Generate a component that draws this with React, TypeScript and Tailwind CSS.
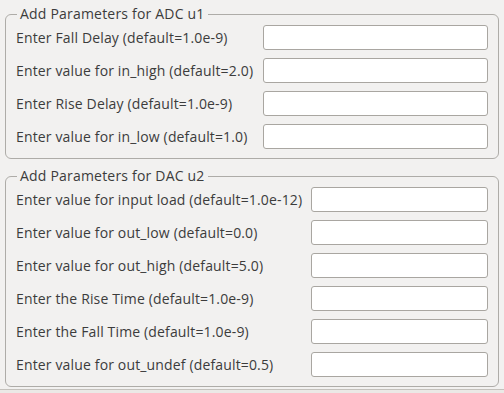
const ADC_FIELDS = [
  "Enter Fall Delay (default=1.0e-9)",
  "Enter value for in_high (default=2.0)",
  "Enter Rise Delay (default=1.0e-9)",
  "Enter value for in_low (default=1.0)",
];

const DAC_FIELDS = [
  "Enter value for input load (default=1.0e-12)",
  "Enter value for out_low (default=0.0)",
  "Enter value for out_high (default=5.0)",
  "Enter the Rise Time (default=1.0e-9)",
  "Enter the Fall Time (default=1.0e-9)",
  "Enter value for out_undef (default=0.5)",
];

function Group({
  title,
  fields,
  labelCol,
  className = "",
}: {
  title: string;
  fields: string[];
  labelCol: string;
  className?: string;
}) {
  return (
    <fieldset
      className={`mx-[5px] rounded-[6px] border border-[#aeaca8] pl-[10px] pr-[10px] pt-[2px] pb-[9px] ${className}`}
    >
      <legend className="ml-[1px] px-[3px] text-[14px] leading-[18px] tracking-[0.2px] text-[#3c3c3c]">{title}</legend>
      <div className={`grid ${labelCol} gap-y-[8px]`}>
        {fields.map((f) => (
          <div key={f} className="contents">
            <label className="flex h-[25px] items-center whitespace-nowrap text-[14px] tracking-[0.15px] text-[#3c3c3c]">{f}</label>
            <input
              type="text"
              className="h-[25px] w-full rounded-[3px] border border-[#a9a6a1] bg-white px-1 text-[14px] outline-none"
            />
          </div>
        ))}
      </div>
    </fieldset>
  );
}

export default function App() {
  return (
    <div className="flex h-[393px] w-[504px] flex-col overflow-hidden bg-[#f2f1f0] font-['Open_Sans',sans-serif]">
      <Group title="Add Parameters for ADC u1" fields={ADC_FIELDS} labelCol="grid-cols-[247px_1fr]" className="mt-[5px]" />
      <Group title="Add Parameters for DAC u2" fields={DAC_FIELDS} labelCol="grid-cols-[295px_1fr]" className="mt-[8px]" />
      <div className="mt-auto h-[4px] border-t border-[#c4c1bc] bg-[#ebe9e6]" />
    </div>
  );
}
